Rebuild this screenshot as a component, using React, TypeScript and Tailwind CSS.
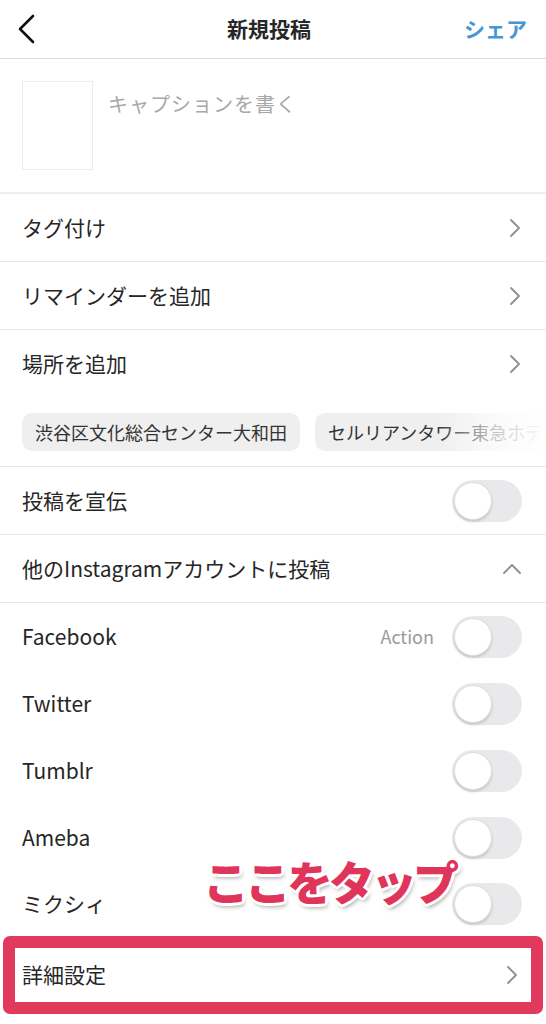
import React from "react";

const font = "font-['Noto_Sans_CJK_JP','Noto_Sans',sans-serif]";

function ChevronRight() {
  return (
    <svg width="14" height="20" viewBox="0 0 14 20" fill="none">
      <polyline points="3,2 11,10 3,18" stroke="#8e8e8e" strokeWidth="1.8" strokeLinecap="round" strokeLinejoin="round" />
    </svg>
  );
}

function ChevronUp() {
  return (
    <svg width="20" height="14" viewBox="0 0 20 14" fill="none">
      <polyline points="2,11 10,3 18,11" stroke="#8e8e8e" strokeWidth="1.8" strokeLinecap="round" strokeLinejoin="round" />
    </svg>
  );
}

function Toggle() {
  return (
    <div className="w-[70px] h-[42px] rounded-full bg-[#e9e9eb] p-[2px] flex items-center">
      <div className="w-[38px] h-[38px] rounded-full bg-white border border-[#dedede] shadow-[0_2px_3px_rgba(0,0,0,0.15)]" />
    </div>
  );
}

function Row({ label, right, border = true, h = "h-[68px]" }: { label: string; right?: React.ReactNode; border?: boolean; h?: string }) {
  return (
    <div className={`${h} flex items-center justify-between pl-[22px] pr-[24px] ${border ? "border-b border-[#e6e6e6]" : ""}`}>
      <span className="text-[21px] text-[#262626]">{label}</span>
      {right}
    </div>
  );
}

export default function App() {
  return (
    <div className={`relative w-[546px] h-[1024px] bg-white overflow-hidden ${font}`}>
      {/* header */}
      <div className="h-[59px] flex items-center justify-between pl-[16px] pr-[19px] border-b border-[#dcdcdc]">
        <svg width="22" height="32" viewBox="0 0 22 32" fill="none">
          <polyline points="17,3 4,16 17,29" stroke="#111" strokeWidth="2.6" strokeLinecap="round" strokeLinejoin="round" />
        </svg>
        <span className="text-[21px] font-bold text-[#262626] ml-[36px]">新規投稿</span>
        <span className="text-[21px] font-bold text-[#4596d4]">シェア</span>
      </div>

      {/* caption */}
      <div className="h-[135px] flex gap-[15px] pl-[22px] pt-[22px] border-b-2 border-[#efefef]">
        <div className="w-[71px] h-[89px] bg-white border border-[#ececec]" />
        <span className="text-[20px] text-[#a8a8a8] leading-none mt-[13px] tracking-[1px]">キャプションを書く</span>
      </div>

      <Row label="タグ付け" right={<ChevronRight />} />
      <Row label="リマインダーを追加" right={<ChevronRight />} />
      <Row label="場所を追加" right={<ChevronRight />} border={false} />

      {/* location chips */}
      <div className="relative h-[69px] flex gap-[15px] pl-[22px] pt-[15px] border-b border-[#e6e6e6] overflow-hidden">
        <div className="h-[38px] shrink-0 flex items-center px-[13px] rounded-[10px] bg-[#efefef] text-[18px] text-[#333]">渋谷区文化総合センター大和田</div>
        <div className="h-[38px] shrink-0 flex items-center px-[13px] rounded-[10px] bg-[#efefef] text-[18px] text-[#333]">セルリアンタワー東急ホテル</div>
        <div className="absolute right-0 top-0 h-full w-[110px] bg-gradient-to-r from-transparent via-white/70 to-white" />
      </div>

      <Row label="投稿を宣伝" right={<Toggle />} />
      <Row label="他のInstagramアカウントに投稿" right={<ChevronUp />} />
      <Row
        label="Facebook"
        border={false}
        h="h-[67px]"
        right={
          <div className="flex items-center gap-[18px]">
            <span className="text-[18px] text-[#9a9a9a]">Action</span>
            <Toggle />
          </div>
        }
      />
      <Row label="Twitter" border={false} right={<Toggle />} h="h-[67px]" />
      <Row label="Tumblr" border={false} right={<Toggle />} h="h-[67px]" />
      <Row label="Ameba" border={false} right={<Toggle />} h="h-[67px]" />
      <Row label="ミクシィ" border={false} right={<Toggle />} h="h-[65px]" />

      {/* highlighted row */}
      <div className="mx-[3px] h-[78px] border-[12px] border-[#e23a5c] rounded-[7px] flex items-center justify-between pl-[7px] pr-[12px]">
        <span className="text-[21px] text-[#262626]">詳細設定</span>
        <ChevronRight />
      </div>

      {/* annotation */}
      <div className="absolute left-[203px] top-[857px] text-[46px] font-black leading-none text-[#e0355a] tracking-[-4px] [text-shadow:2px_0_0_#fff,-2px_0_0_#fff,0_2px_0_#fff,0_-2px_0_#fff,2px_2px_0_#fff,-2px_-2px_0_#fff,2px_-2px_0_#fff,-2px_2px_0_#fff,3px_0_0_#fff,-3px_0_0_#fff,0_3px_0_#fff,0_-3px_0_#fff,2px_4px_4px_rgba(0,0,0,0.35)]">
        ここをタップ
      </div>
    </div>
  );
}
